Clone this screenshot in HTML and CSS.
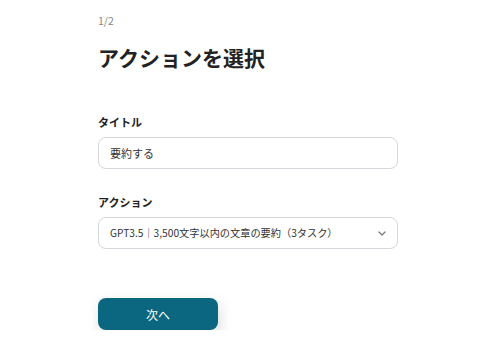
FILE: index.html
```html
<!DOCTYPE html>
<html lang="ja">
<head>
<meta charset="utf-8">
<link rel="stylesheet" href="styles.css">
</head>
<body>
<div class="page">
  <div class="step">1/2</div>
  <h1 class="title">アクションを選択</h1>
  <div class="field first">
    <label class="label">タイトル</label>
    <div class="input">要約する</div>
  </div>
  <div class="field">
    <label class="label">アクション</label>
    <div class="input select">
      <span>GPT3.5｜3,500文字以内の文章の要約（3タスク）</span>
      <svg class="chev" width="8" height="5" viewBox="0 0 8 5"><path d="M1 1l3 3 3-3" fill="none" stroke="#777" stroke-width="1.2" stroke-linecap="round" stroke-linejoin="round"/></svg>
    </div>
  </div>
  <button class="btn">次へ</button>
</div>
</body>
</html>
```
FILE: styles.css
```css
html, body { margin: 0; padding: 0; background: #fff; }
body { font-family: "Noto Sans CJK JP", "Noto Sans", sans-serif; color: #222; }
.page { padding: 14px 0 0 98px; width: 300px; display: flex; flex-direction: column; }
.step { font-size: 10.5px; color: #888; line-height: 14px; }
.title { font-size: 21px; font-weight: 700; margin: 15px 0 0; line-height: 28px; color: #222; }
.field { display: flex; flex-direction: column; gap: 7px; margin-top: 25px; }
.field.first { margin-top: 43px; }
.label { font-size: 11px; font-weight: 700; line-height: 16px; color: #222; }
.input { box-sizing: border-box; height: 32px; border: 1px solid #d4d7dc; border-radius: 8px; padding: 0 11px; font-size: 11px; line-height: 30px; color: #333; display: flex; align-items: center; justify-content: space-between; }
.select { font-size: 10.2px; }
.chev { margin-right: 0; }
.btn { margin-top: 49px; width: 120px; height: 32px; border: none; border-radius: 8px; background: #0b6780; color: #fff; font-family: inherit; font-size: 12px; box-shadow: 2px 5px 14px rgba(0,0,0,0.14); cursor: pointer; }
```
